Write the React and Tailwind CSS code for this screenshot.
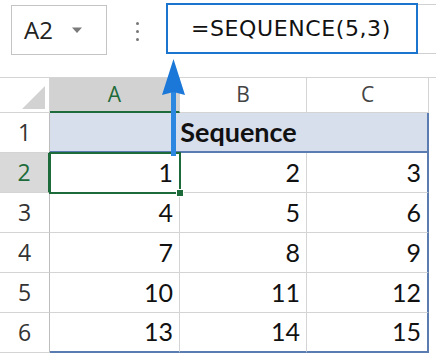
import React from "react";

const rows = [
  [1, 2, 3],
  [4, 5, 6],
  [7, 8, 9],
  [10, 11, 12],
  [13, 14, 15],
];

const ui = { fontFamily: '"Open Sans", "Noto Sans", sans-serif' };
const cellFont = { fontFamily: 'Lato, "Open Sans", sans-serif' };

function ColHead({ label, active }) {
  return (
    <div
      className={
        "flex items-center justify-center border-r border-t border-[#d4d4d4] text-[21px] " +
        (active ? "bg-[#d2d2d2] text-[#1d6b3a] border-b-2 border-b-[#1d6b3a]" : "bg-white text-[#444] border-b border-b-[#d4d4d4]")
      }
      style={ui}
    >
      {label}
    </div>
  );
}

function RowHead({ n, active }) {
  return (
    <div
      className={
        "flex items-center justify-center border-b border-[#d4d4d4] text-[23px] " +
        (active ? "bg-[#d9d9d9] text-[#1d6b3a] border-r-2 border-r-[#1d6b3a]" : "bg-white text-[#333] border-r border-r-[#bdbdbd]")
      }
      style={ui}
    >
      {n}
    </div>
  );
}

export default function App() {
  return (
    <div className="relative h-[356px] w-[436px] overflow-hidden bg-white">
      {/* formula bar */}
      <div className="flex h-[77px] items-start pt-[3px]">
        <div className="ml-[11px] mt-[2px] flex h-[50px] w-[96px] items-center border border-[#c4c4c4] pl-[12px]">
          <span className="text-[24px] text-[#222]" style={ui}>A2</span>
          <svg className="ml-[19px]" width="10" height="7" viewBox="0 0 10 7">
            <path d="M0 0.5 L10 0.5 L5 6 Z" fill="#7a7a7a" />
          </svg>
        </div>
        <div className="ml-[29px] mt-[19px] flex flex-col gap-[5px]">
          <span className="block h-[3px] w-[3px] rounded-full bg-[#777]" />
          <span className="block h-[3px] w-[3px] rounded-full bg-[#777]" />
          <span className="block h-[3px] w-[3px] rounded-full bg-[#777]" />
        </div>
        <div className="ml-[27px] flex h-[51px] w-[252px] items-center border-2 border-[#1b75cf] pl-[23px]">
          <span className="text-[22px] tracking-[0.6px] text-[#111]" style={{ fontFamily: '"DejaVu Sans", sans-serif' }}>
            =SEQUENCE(5,3)
          </span>
        </div>
        <div className="mt-[1px] h-[50px] flex-1 border-y border-[#d0d0d0]" />
      </div>

      {/* grid */}
      <div className="grid grid-cols-[50px_130px_127px_122px_7px] grid-rows-[36px_40px_40px_40px_40px_40px_40px]">
        <div className="relative border-r border-t border-b border-[#d4d4d4] bg-white">
          <svg className="absolute left-[22px] top-[8px]" width="23" height="23" viewBox="0 0 23 23">
            <path d="M23 0 L23 23 L0 23 Z" fill="#d2d2d2" />
          </svg>
        </div>
        <ColHead label="A" active />
        <ColHead label="B" />
        <ColHead label="C" />
        <div className="border-t border-[#d4d4d4]" />

        <RowHead n={1} />
        <div
          className="col-span-3 flex items-center justify-center border-b-2 border-r-2 border-[#5a7cb0] bg-[#d7deec] text-[27px] font-bold text-[#111]"
          style={cellFont}
        >
          Sequence
        </div>
        <div />

        {rows.map((r, i) => (
          <React.Fragment key={i}>
            <RowHead n={i + 2} active={i === 0} />
            {r.map((v, j) => (
              <div
                key={j}
                className={
                  "flex items-center justify-end pr-[6px] text-[25px] text-[#111] " +
                  (j === 2 ? "border-r-2 border-r-[#5a7cb0] " : "border-r border-r-[#d4d4d4] ") +
                  (i === 4 ? "border-b-2 border-b-[#5a7cb0]" : "border-b border-b-[#d4d4d4]")
                }
                style={cellFont}
              >
                {v}
              </div>
            ))}
            <div />
          </React.Fragment>
        ))}
      </div>

      {/* active cell A2 */}
      <div className="absolute left-[49px] top-[152px] h-[42px] w-[132px] border-2 border-[#1d6b3a]" />
      <div className="absolute left-[176px] top-[189px] h-[8px] w-[8px] border border-white bg-[#1d6b3a]" />

      {/* arrow */}
      <svg className="absolute left-[160px] top-[56px]" width="28" height="102" viewBox="0 0 28 102">
        <rect x="11" y="34" width="5" height="66" fill="#2b87e0" />
        <path d="M13.5 3 L25 39 L13.5 36 L2 39 Z" fill="#1b78d8" />
      </svg>
    </div>
  );
}
